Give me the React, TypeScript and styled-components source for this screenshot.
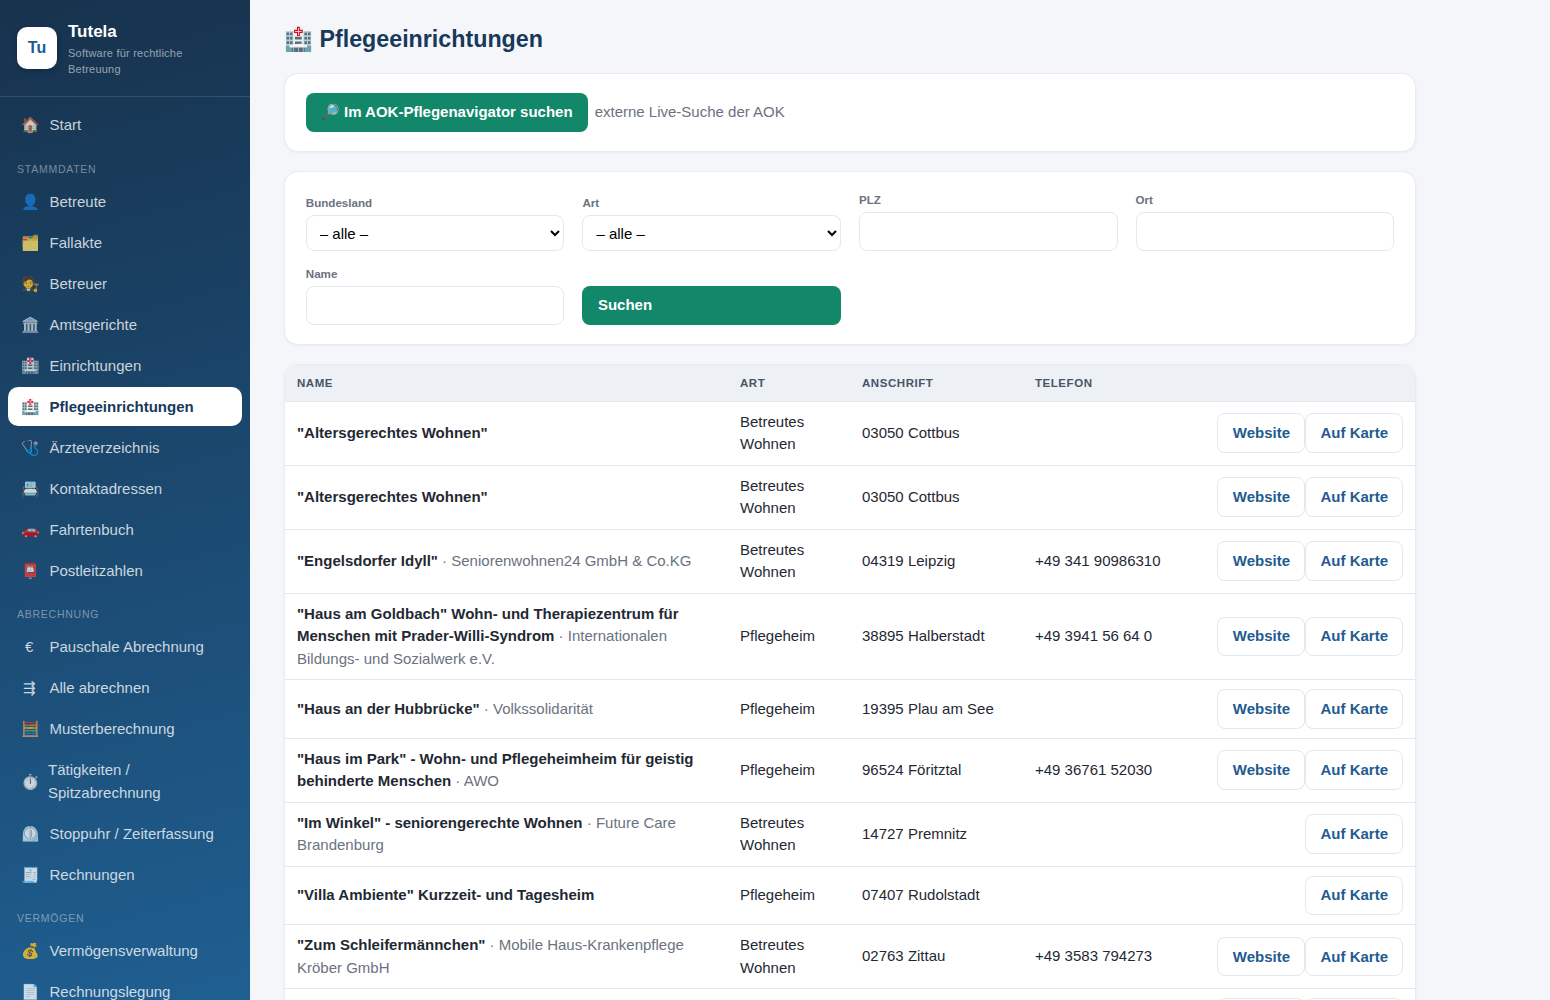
import React from 'react';
import styled, { createGlobalStyle } from 'styled-components';

const GlobalStyle = createGlobalStyle`
  html, body {
    margin: 0;
    height: 100%;
    overflow: hidden;
  }
  body {
    background: #f4f6fa;
    font-family: "Liberation Sans", Arial, sans-serif;
    font-size: 15px;
    line-height: 1.5;
    color: #1f2933;
  }
  * {
    box-sizing: border-box;
  }
`;

type NavEntry = { icon: string; label: string; active?: boolean };
type NavGroup = { title?: string; items: NavEntry[] };

const navGroups: NavGroup[] = [
  { items: [{ icon: '🏠', label: 'Start' }] },
  {
    title: 'Stammdaten',
    items: [
      { icon: '👤', label: 'Betreute' },
      { icon: '🗂️', label: 'Fallakte' },
      { icon: '🧑‍⚖️', label: 'Betreuer' },
      { icon: '🏛️', label: 'Amtsgerichte' },
      { icon: '🏥', label: 'Einrichtungen' },
      { icon: '🏥', label: 'Pflegeeinrichtungen', active: true },
      { icon: '🩺', label: 'Ärzteverzeichnis' },
      { icon: '📇', label: 'Kontaktadressen' },
      { icon: '🚗', label: 'Fahrtenbuch' },
      { icon: '📮', label: 'Postleitzahlen' },
    ],
  },
  {
    title: 'Abrechnung',
    items: [
      { icon: '€', label: 'Pauschale Abrechnung' },
      { icon: '⇶', label: 'Alle abrechnen' },
      { icon: '🧮', label: 'Musterberechnung' },
      { icon: '⏱️', label: 'Tätigkeiten / Spitzabrechnung' },
      { icon: '⏲️', label: 'Stoppuhr / Zeiterfassung' },
      { icon: '🧾', label: 'Rechnungen' },
    ],
  },
  {
    title: 'Vermögen',
    items: [
      { icon: '💰', label: 'Vermögensverwaltung' },
      { icon: '📄', label: 'Rechnungslegung' },
    ],
  },
];

type Facility = {
  name: string;
  org?: string;
  art: string;
  address: string;
  phone?: string;
  website?: boolean;
};

const facilities: Facility[] = [
  { name: '"Altersgerechtes Wohnen"', art: 'Betreutes Wohnen', address: '03050 Cottbus', website: true },
  { name: '"Altersgerechtes Wohnen"', art: 'Betreutes Wohnen', address: '03050 Cottbus', website: true },
  {
    name: '"Engelsdorfer Idyll"',
    org: 'Seniorenwohnen24 GmbH & Co.KG',
    art: 'Betreutes Wohnen',
    address: '04319 Leipzig',
    phone: '+49 341 90986310',
    website: true,
  },
  {
    name: '"Haus am Goldbach" Wohn- und Therapiezentrum für Menschen mit Prader-Willi-Syndrom',
    org: 'Internationalen Bildungs- und Sozialwerk e.V.',
    art: 'Pflegeheim',
    address: '38895 Halberstadt',
    phone: '+49 3941 56 64 0',
    website: true,
  },
  {
    name: '"Haus an der Hubbrücke"',
    org: 'Volkssolidarität',
    art: 'Pflegeheim',
    address: '19395 Plau am See',
    website: true,
  },
  {
    name: '"Haus im Park" - Wohn- und Pflegeheimheim für geistig behinderte Menschen',
    org: 'AWO',
    art: 'Pflegeheim',
    address: '96524 Föritztal',
    phone: '+49 36761 52030',
    website: true,
  },
  {
    name: '"Im Winkel" - seniorengerechte Wohnen',
    org: 'Future Care Brandenburg',
    art: 'Betreutes Wohnen',
    address: '14727 Premnitz',
  },
  { name: '"Villa Ambiente" Kurzzeit- und Tagesheim', art: 'Pflegeheim', address: '07407 Rudolstadt' },
  {
    name: '"Zum Schleifermännchen"',
    org: 'Mobile Haus-Krankenpflege Kröber GmbH',
    art: 'Betreutes Wohnen',
    address: '02763 Zittau',
    phone: '+49 3583 794273',
    website: true,
  },
  { name: '"Zur Linde"', art: 'Pflegeheim', address: '01067 Dresden', website: true },
];

export default function App() {
  return (
    <Layout>
      <GlobalStyle />
      <Sidebar>
        <Brand>
          <BrandLogo>Tu</BrandLogo>
          <BrandText>
            <BrandName>Tutela</BrandName>
            <BrandTagline>Software für rechtliche Betreuung</BrandTagline>
          </BrandText>
        </Brand>
        <Nav>
          {navGroups.map((group, i) => (
            <NavSection key={i}>
              {group.title && <NavTitle>{group.title}</NavTitle>}
              {group.items.map((item) => (
                <NavItem key={item.label} $active={item.active}>
                  <NavIcon>{item.icon}</NavIcon>
                  <span>{item.label}</span>
                </NavItem>
              ))}
            </NavSection>
          ))}
        </Nav>
      </Sidebar>

      <Main>
        <Content>
          <PageTitle>🏥 Pflegeeinrichtungen</PageTitle>

          <SearchCard>
            <SearchButton>🔎 Im AOK-Pflegenavigator suchen</SearchButton>
            <Hint>externe Live-Suche der AOK</Hint>
          </SearchCard>

          <FilterCard>
            <Field>
              <FieldLabel>Bundesland</FieldLabel>
              <Select>
                <option>– alle –</option>
              </Select>
            </Field>
            <Field>
              <FieldLabel>Art</FieldLabel>
              <Select>
                <option>– alle –</option>
              </Select>
            </Field>
            <Field>
              <FieldLabel>PLZ</FieldLabel>
              <Input />
            </Field>
            <Field>
              <FieldLabel>Ort</FieldLabel>
              <Input />
            </Field>
            <Field>
              <FieldLabel>Name</FieldLabel>
              <Input />
            </Field>
            <Field>
              <SubmitButton>Suchen</SubmitButton>
            </Field>
          </FilterCard>

          <TableCard>
            <Table>
              <colgroup>
                <col width="443" />
                <col width="122" />
                <col width="173" />
                <col width="160" />
                <col />
              </colgroup>
              <thead>
                <tr>
                  <Th>Name</Th>
                  <Th>Art</Th>
                  <Th>Anschrift</Th>
                  <Th>Telefon</Th>
                  <Th />
                </tr>
              </thead>
              <tbody>
                {facilities.map((f, i) => (
                  <tr key={i}>
                    <Td>
                      <strong>{f.name}</strong>
                      {f.org && <OrgName> · {f.org}</OrgName>}
                    </Td>
                    <Td>{f.art}</Td>
                    <Td>{f.address}</Td>
                    <Td>{f.phone}</Td>
                    <ActionCell>
                      {f.website && <LinkButton>Website</LinkButton>}
                      <LinkButton>Auf Karte</LinkButton>
                    </ActionCell>
                  </tr>
                ))}
              </tbody>
            </Table>
          </TableCard>
        </Content>
      </Main>
    </Layout>
  );
}

const Layout = styled.div`
  display: flex;
  height: 100vh;
  overflow: hidden;
`;

const Sidebar = styled.aside`
  flex: 0 0 250px;
  height: 100%;
  overflow: hidden;
  background: linear-gradient(165deg, #17324d 0%, #1f5f91 100%);
  color: #fff;
`;

const Brand = styled.div`
  display: flex;
  align-items: center;
  gap: 11px;
  padding: 18.5px 17px;
  border-bottom: 1px solid rgba(255, 255, 255, 0.12);
`;

const BrandLogo = styled.div`
  flex: 0 0 40px;
  height: 42px;
  display: flex;
  align-items: center;
  justify-content: center;
  background: #fff;
  border-radius: 10px;
  box-shadow: 0 2px 6px rgba(0, 0, 0, 0.2);
  color: #1f5c8f;
  font-size: 16px;
  font-weight: 700;
`;

const BrandText = styled.div`
  min-width: 0;
`;

const BrandName = styled.div`
  font-size: 17px;
  font-weight: 700;
  line-height: 25.5px;
`;

const BrandTagline = styled.div`
  margin-top: 0.5px;
  font-size: 11px;
  line-height: 16.5px;
  letter-spacing: 0.22px;
  color: rgba(255, 255, 255, 0.55);
`;

const Nav = styled.nav`
  padding: 8px 8px 16px;
`;

const NavSection = styled.div`
  &:first-child {
    margin-bottom: 17px;
  }
`;

const NavTitle = styled.div`
  margin: 16px 9px 4.5px;
  font-size: 10.5px;
  line-height: 16.5px;
  letter-spacing: 0.75px;
  text-transform: uppercase;
  color: rgba(255, 255, 255, 0.42);
`;

const NavItem = styled.div<{ $active?: boolean }>`
  display: flex;
  align-items: center;
  gap: 12.25px;
  margin-bottom: 2px;
  padding: 8px 14px 8px 13.25px;
  border-radius: 10px;
  line-height: 23px;
  background: ${(p) => (p.$active ? '#fff' : 'transparent')};
  color: ${(p) => (p.$active ? '#18395a' : 'rgba(255, 255, 255, 0.78)')};
  font-weight: ${(p) => (p.$active ? 700 : 400)};
`;

const NavIcon = styled.span`
  width: 16px;
  min-width: 0;
  text-align: center;
`;

const Main = styled.main`
  flex: 1;
  min-width: 0;
  height: 100%;
  overflow: hidden;
  padding: 21.5px 34px 0;
`;

const Content = styled.div`
  max-width: 1132px;
`;

const PageTitle = styled.h1`
  margin: 0 0 16.75px;
  font-size: 23.25px;
  line-height: 35px;
  font-weight: 700;
  color: #18395a;
`;

const Card = styled.div`
  background: #fff;
  border: 1px solid #e8ecf2;
  border-radius: 14px;
  box-shadow: 0 1px 3px rgba(23, 50, 77, 0.05);
  margin-bottom: 19.25px;
`;

const SearchCard = styled(Card)`
  display: flex;
  align-items: center;
  gap: 7px;
  padding: 19.2px 20.8px;
`;

const PrimaryButton = styled.button`
  height: 38.5px;
  border: 0;
  border-radius: 8px;
  background: #12876a;
  color: #fff;
  font: inherit;
  font-weight: 700;
  text-align: left;
`;

const SearchButton = styled(PrimaryButton)`
  padding: 0 15px;
`;

const SubmitButton = styled(PrimaryButton)`
  display: block;
  width: 100%;
  padding: 0 15.5px;
`;

const Hint = styled.span`
  color: #6b7280;
`;

const FilterCard = styled(Card)`
  display: grid;
  grid-template-columns: repeat(4, 1fr);
  gap: 15px 18px;
  align-items: end;
  padding: 19.2px 20.8px;
`;

const Field = styled.div`
  min-width: 0;
`;

const FieldLabel = styled.label`
  display: block;
  margin-bottom: 4px;
  font-size: 11.6px;
  line-height: 16.5px;
  font-weight: 700;
  color: #6b7280;
`;

const Select = styled.select`
  display: block;
  width: 100%;
  height: 35.5px;
  padding: 2px 9px 0;
  background: #fff;
  border: 1px solid #e2e8f0;
  border-radius: 8px;
  color: #000;
  font: inherit;
`;

const Input = styled.input`
  display: block;
  width: 100%;
  height: 38.5px;
  padding: 8px 13px;
  background: #fff;
  border: 1px solid #e2e8f0;
  border-radius: 8px;
  font: inherit;
`;

const TableCard = styled(Card)`
  overflow: hidden;
`;

const Table = styled.table`
  width: 100%;
  border-collapse: collapse;
  table-layout: fixed;
`;

const Th = styled.th`
  padding: 9.5px 12px;
  background: #edf0f5;
  border-bottom: 1px solid #e2e8f0;
  text-align: left;
  font-size: 11.5px;
  line-height: 16.5px;
  font-weight: 700;
  letter-spacing: 0.55px;
  text-transform: uppercase;
  color: #475569;
`;

const Td = styled.td`
  padding: 9px 12px;
  border-bottom: 1px solid #e2e8f0;
  vertical-align: middle;
  color: #1f2933;
`;

const OrgName = styled.span`
  color: #6b7280;
`;

const ActionCell = styled(Td)`
  white-space: nowrap;
  text-align: right;
  font-size: 0;
`;

const LinkButton = styled.button`
  height: 39.5px;
  padding: 0 14px 1px 14.4px;
  background: #fff;
  border: 1px solid #e2e8f0;
  border-radius: 8px;
  color: #1f5c8f;
  font-family: inherit;
  font-size: 15px;
  font-weight: 700;
  vertical-align: top;
`;
